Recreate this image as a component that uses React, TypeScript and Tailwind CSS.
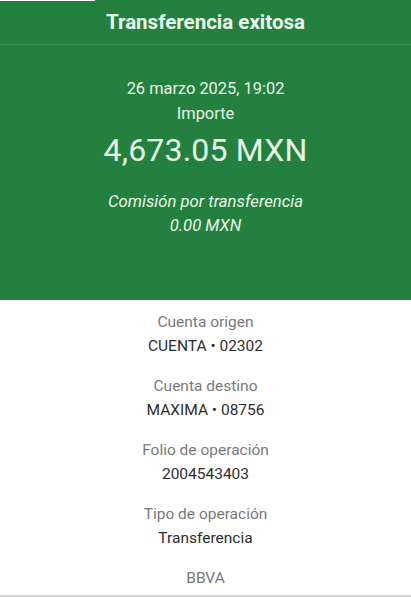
import React from 'react';

const details = [
  { label: 'Cuenta origen', value: 'CUENTA • 02302' },
  { label: 'Cuenta destino', value: 'MAXIMA • 08756' },
  { label: 'Folio de operación', value: '2004543403' },
  { label: 'Tipo de operación', value: 'Transferencia' },
];

const App: React.FC = () => {
  return (
    <div className="w-[411px] h-[597px] bg-white flex flex-col overflow-hidden" style={{ fontFamily: 'Roboto, "Noto Sans", sans-serif' }}>
      <div className="bg-[#24803e] h-[300px] flex flex-col relative">
        <div className="absolute top-0 left-0 w-[95px] h-px bg-white" />
        <div className="h-[45px] flex items-center justify-center pt-[1px] border-b border-[#3a8d52] text-[20.5px] font-bold text-[#e9f7ea]">
          Transferencia exitosa
        </div>
        <div className="flex flex-col items-center pt-[31px] text-[#e6f5e7]">
          <div className="text-[16.4px] leading-[25px]">26 marzo 2025, 19:02</div>
          <div className="text-[16.4px] leading-[25px]">Importe</div>
          <div className="text-[32px] leading-[40px] mt-[4px] tracking-[0.2px]">4,673.05 MXN</div>
          <div className="mt-[20px] italic text-[16.7px] leading-[24px]">Comisión por transferencia</div>
          <div className="italic text-[16.7px] leading-[24px]">0.00 MXN</div>
        </div>
      </div>
      <div className="flex-1 flex flex-col items-center pt-[10px] gap-[16px] border-b-2 border-[#d4d4d4]">
        {details.map((d) => (
          <div key={d.label} className="flex flex-col items-center">
            <div className="text-[15.5px] leading-[24px] text-[#7a7a7a]">{d.label}</div>
            <div className="text-[15.5px] leading-[24px] text-[#2e2e2e]">{d.value}</div>
          </div>
        ))}
        <div className="text-[15.5px] leading-[24px] text-[#7a7a7a]">BBVA</div>
      </div>
    </div>
  );
};

export default App;
